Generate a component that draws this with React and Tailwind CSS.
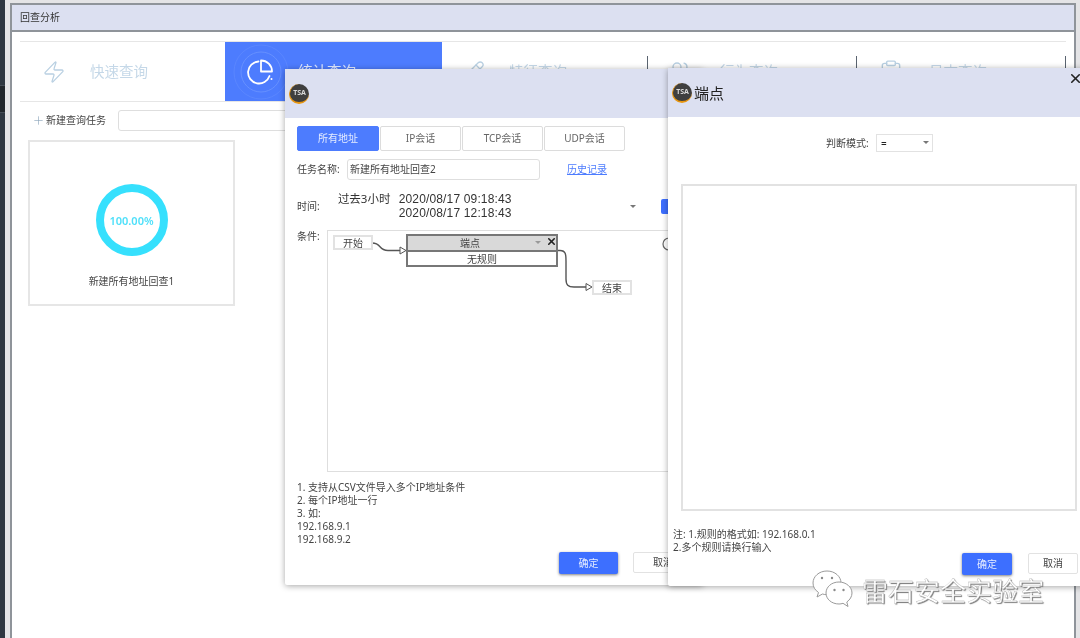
import React from 'react';
import { Zap, Plus, Pencil, Users, Clipboard, X } from 'lucide-react';

const FONT = "font-['Noto_Sans','Noto_Sans_CJK_SC',sans-serif]";

function TsaLogo({ className = '' }) {
  return (
    <div className={`w-[20px] h-[20px] rounded-full bg-[#3f3f3f] border-b-2 border-l border-[#e8960f] flex items-center justify-center shrink-0 ${className}`}>
      <span className="text-[7px] font-bold text-[#d8d8d8] leading-none">TSA</span>
    </div>
  );
}

function TopTab({ icon, label, active, divider, width, iconBox, textGap }) {
  return (
    <div className={`${width} h-[59px] flex items-center relative ${active ? 'bg-[#4d7cfe] text-[#dfe8ff]' : 'text-[#c5d8e8]'}`}>
      <div className={`${iconBox} flex justify-end shrink-0`}>{icon}</div>
      <span className={`text-[14.5px] ${textGap} leading-none`}>{label}</span>
      {divider && <div className="absolute right-0 top-[14px] h-[30px] w-px bg-[#5a6470]" />}
    </div>
  );
}

function PieIcon() {
  return (
    <svg width="60" height="60" viewBox="0 0 60 60" fill="none" className="-mr-[22px]">
      <circle cx="30" cy="30" r="27" stroke="#5a86fe" strokeWidth="1" />
      <circle cx="30" cy="30" r="20" stroke="#6690fe" strokeWidth="1" />
      <path d="M27.5 19.5 A11 11 0 1 0 38.5 34" stroke="#fff" strokeWidth="1.8" strokeLinecap="round" />
      <path d="M30 18.5 A11 11 0 0 1 41 29.5 H30 Z" stroke="#fff" strokeWidth="1.8" strokeLinejoin="round" />
      <circle cx="40.5" cy="37" r="1" fill="#fff" />
    </svg>
  );
}

function ModeTab({ label, active }) {
  return (
    <div className={`h-[25px] flex items-center justify-center text-[10px] rounded-[2px] border ${active ? 'w-[82px] bg-[#4d7cfe] border-[#4d7cfe] text-[#e6edff]' : 'w-[81px] bg-white border-[#dcdcdc] text-[#666]'}`}>
      {label}
    </div>
  );
}

function FlowCanvas() {
  return (
    <div className="relative h-[242px] border border-[#dedede] bg-white text-[10px] text-[#444]">
      <svg className="absolute inset-0 w-full h-full" fill="none">
        <path d="M44 12 C54 12 50 19.500 60 19.500 H72" stroke="#555" strokeWidth="1.4" />
        <path d="M72 16 L78 19.500 L72 23 Z" fill="#fff" stroke="#555" strokeWidth="1" />
        <path d="M229 19.500 H232 C238 19.500 238 24 238 30 V48 C238 54 240 56 246 56 H258" stroke="#555" strokeWidth="1.4" />
        <path d="M258 52.500 L264 56 L258 59.500 Z" fill="#fff" stroke="#555" strokeWidth="1" />
        <circle cx="341" cy="13" r="6" stroke="#666" strokeWidth="1.2" />
      </svg>
      <div className="absolute left-[5px] top-[4px] w-[40px] h-[15px] border-2 border-[#e2e2e2] flex items-center justify-center leading-none">开始</div>
      <div className="absolute left-[264px] top-[49px] w-[40px] h-[15px] border-2 border-[#e2e2e2] flex items-center justify-center leading-none">结束</div>
      <div className="absolute left-[78px] top-[3px] w-[152px] h-[33px] border-2 border-[#777] bg-white">
        <div className="relative h-[16px] bg-[#d9d9d9] border-b-2 border-[#777] flex items-center justify-center pr-[24px] leading-none">
          端点
          <span className="absolute right-[15px] top-[5px] w-0 h-0 border-x-[3px] border-x-transparent border-t-[3px] border-t-[#999]" />
          <X size={11} strokeWidth={3.5} className="absolute right-[-1px] top-0 text-[#222]" />
        </div>
        <div className="h-[13px] flex items-center justify-center leading-none">无规则</div>
      </div>
    </div>
  );
}

function QueryDialog() {
  return (
    <div className="absolute left-[285px] top-[69px] w-[418px] h-[516px] bg-white rounded-[2px] shadow-[0_1px_6px_rgba(0,0,0,0.35)] text-[#444]">
      <div className="h-[49px] bg-[#dce0f1] flex items-center pl-[4px]">
        <TsaLogo />
      </div>
      <div className="px-[12px] pt-[8px]">
        <div className="flex gap-px">
          <ModeTab label="所有地址" active />
          <ModeTab label="IP会话" />
          <ModeTab label="TCP会话" />
          <ModeTab label="UDP会话" />
        </div>

        <div className="flex items-center mt-[8px] h-[21px] text-[10px]">
          <span className="w-[50px]">任务名称:</span>
          <div className="w-[193px] h-[21px] border border-[#dedede] rounded-[3px] flex items-center px-[2px]">新建所有地址回查2</div>
          <span className="ml-[27px] text-[#4d7cfe] underline">历史记录</span>
        </div>

        <div className="flex items-center mt-[12px] h-[28px]">
          <span className="w-[41px] text-[10px]">时间:</span>
          <span className="w-[61px] text-[11.5px] text-[#333] self-start leading-[14px]">过去3小时</span>
          <div className="w-[232px] font-['Liberation_Sans',sans-serif] text-[12px] tracking-[0.15px] text-[#333] leading-[14px] whitespace-nowrap">
            <div>2020/08/17 09:18:43</div>
            <div>2020/08/17 12:18:43</div>
          </div>
          <span className="w-0 h-0 border-x-[3px] border-x-transparent border-t-[3px] border-t-[#777]" />
          <div className="ml-[25px] w-[30px] h-[15px] rounded-[2px] bg-[#3d6fff] shrink-0" />
        </div>

        <div className="flex mt-[10px]">
          <span className="w-[30px] text-[10px] leading-[12px] shrink-0">条件:</span>
          <div className="w-[366px] shrink-0"><FlowCanvas /></div>
        </div>

        <div className="mt-[9px] text-[10px] leading-[13px] text-[#444]">
          <div>1. 支持从CSV文件导入多个IP地址条件</div>
          <div>2. 每个IP地址一行</div>
          <div>3. 如:</div>
          <div>192.168.9.1</div>
          <div>192.168.9.2</div>
        </div>

        <div className="flex justify-end gap-[15px] mt-[6px] mr-[-2px]">
          <div className="w-[59px] h-[22px] rounded-[2px] bg-[#3d6fff] text-[#e6edff] text-[10px] flex items-center justify-center shadow-[0_1px_3px_rgba(0,0,0,0.5)]">确定</div>
          <div className="w-[60px] h-[21px] rounded-[2px] border border-[#e2e2e2] text-[10px] flex items-center justify-center">取消</div>
        </div>
      </div>
    </div>
  );
}

function EndpointDialog() {
  return (
    <div className="absolute left-[668px] top-[68px] w-[420px] h-[518px] bg-white rounded-[2px] shadow-[0_1px_6px_rgba(0,0,0,0.35)] text-[#444]">
      <div className="relative h-[49px] bg-[#dce0f1] flex items-center pl-[4px]">
        <TsaLogo />
        <span className="ml-[2px] mt-[2px] text-[15px] text-[#222] leading-none">端点</span>
        <X size={15} strokeWidth={2.5} className="absolute left-[400px] top-[3px] text-[#222]" />
      </div>
      <div className="flex items-center h-[18px] mt-[17px] pl-[158px] text-[10px]">
        <span className="w-[50px]">判断模式:</span>
        <div className="relative w-[57px] h-[18px] border border-[#e2e2e2] flex items-center pl-[4px] text-[#222]">
          =
          <span className="absolute right-[3px] top-[6px] w-0 h-0 border-x-[3px] border-x-transparent border-t-[3px] border-t-[#777]" />
        </div>
      </div>
      <div className="ml-[13px] mt-[32px] w-[396px] h-[327px] border-2 border-[#e2e2e2]" />
      <div className="ml-[5px] mt-[17px] text-[10px] leading-[13px]">
        <div>注: 1.规则的格式如: 192.168.0.1</div>
        <div>2.多个规则请换行输入</div>
      </div>
      <div className="flex gap-[16px] mt-[-1px] ml-[294px] text-[10px]">
        <div className="w-[50px] h-[22px] rounded-[2px] bg-[#3d6fff] text-[#e6edff] flex items-center justify-center shadow-[0_1px_3px_rgba(0,0,0,0.5)]">确定</div>
        <div className="w-[50px] h-[21px] rounded-[2px] border border-[#e2e2e2] flex items-center justify-center">取消</div>
      </div>
    </div>
  );
}

function Watermark() {
  return (
    <div className="absolute left-[812px] top-[570px] flex items-center gap-[9px]">
      <svg width="41" height="38" viewBox="0 0 41 38" fill="#fff" stroke="#9a9a9a" strokeWidth="1">
        <path d="M15 1 C7 1 1 6.500 1 13 C1 17 3 20 6.500 22.500 L5 27 L10.500 24 C12 24.500 13.500 24.700 15 24.700 C23 24.700 29 19.500 29 13 C29 6.500 23 1 15 1 Z" />
        <path d="M27 12 C19.500 12 14 17 14 23 C14 29 19.500 34 27 34 C28.500 34 29.500 33.800 31 33.300 L36 36.500 L34.800 32 C38 29.800 40 26.500 40 23 C40 17 34 12 27 12 Z" />
        <circle cx="10" cy="8" r="1.2" fill="#8a8a8a" stroke="none" />
        <circle cx="20" cy="8" r="1.2" fill="#8a8a8a" stroke="none" />
        <circle cx="22.500" cy="20" r="1.200" fill="#8a8a8a" stroke="none" />
        <circle cx="31.500" cy="20" r="1.200" fill="#8a8a8a" stroke="none" />
      </svg>
      <span className="text-[26px] leading-none mt-[4px] text-white [-webkit-text-stroke:0.3px_#aaa] [text-shadow:1px_1px_1px_#777]">雷石安全实验室</span>
    </div>
  );
}

export default function App() {
  return (
    <div className={`relative flex w-[1080px] h-[638px] overflow-hidden bg-[#e4e4e6] blur-[0.4px] ${FONT}`}>
      {/* desktop behind the window */}
      <div className="w-[5px] shrink-0 bg-[#2e3741] pt-[85px]">
        <div className="h-[28px] bg-[#20262b] border-y border-[#454d56]" />
      </div>
      <div className="w-[5px] shrink-0" />

      {/* main window */}
      <div className="w-[1066px] shrink-0 mt-[3px] border-x-2 border-t-2 border-[#8f949a] bg-white flex flex-col">
        <div className="h-[27px] shrink-0 bg-[#dce0f1] border-b-2 border-[#8f949a] flex items-center pl-[8px] text-[10px] text-[#333]">
          回查分析
        </div>
        <div className="px-[8px] pt-[9px] text-[#444]">
          <div className="flex border-y border-[#e6e6e6]">
            <TopTab width="w-[205px]" iconBox="w-[46px]" textGap="ml-[24px]" label="快速查询" icon={<Zap size={24} strokeWidth={1.3} className="text-[#b9d0e2]" />} />
            <TopTab width="w-[217px]" iconBox="w-[44px]" textGap="ml-[29px]" label="统计查询" active icon={<PieIcon />} />
            <TopTab width="w-[206px]" iconBox="w-[43px]" textGap="ml-[24px]" label="特征查询" divider icon={<Pencil size={24} strokeWidth={1.3} className="text-[#b9d0e2]" />} />
            <TopTab width="w-[209px]" iconBox="w-[44px]" textGap="ml-[28px]" label="行为查询" divider icon={<Users size={24} strokeWidth={1.3} className="text-[#b9d0e2]" />} />
            <TopTab width="w-[209px]" iconBox="w-[47px]" textGap="ml-[25px]" label="日志查询" divider icon={<Clipboard size={26} strokeWidth={1.3} className="text-[#b9d0e2]" />} />
          </div>

          <div className="flex items-center mt-[8px] h-[21px] pl-[12px] text-[10px]">
            <Plus size={13} strokeWidth={1.2} className="text-[#8ca5bb]" />
            <span className="ml-[1px]">新建查询任务</span>
            <div className="ml-[12px] w-[300px] h-[21px] border border-[#dedede] rounded-[3px]" />
          </div>

          <div className="mt-[9px] ml-[8px] w-[207px] h-[166px] border-2 border-[#e6e6e6] flex flex-col items-center">
            <div className="mt-[42px] w-[72px] h-[72px] rounded-full border-[8px] border-[#36e0fd] flex items-center justify-center">
              <span className="text-[11px] font-semibold text-[#4fe0fa] leading-none whitespace-nowrap">100.00%</span>
            </div>
            <span className="mt-[20px] text-[10px] leading-none">新建所有地址回查1</span>
          </div>
        </div>
      </div>

      <QueryDialog />
      <EndpointDialog />
      <Watermark />
    </div>
  );
}
